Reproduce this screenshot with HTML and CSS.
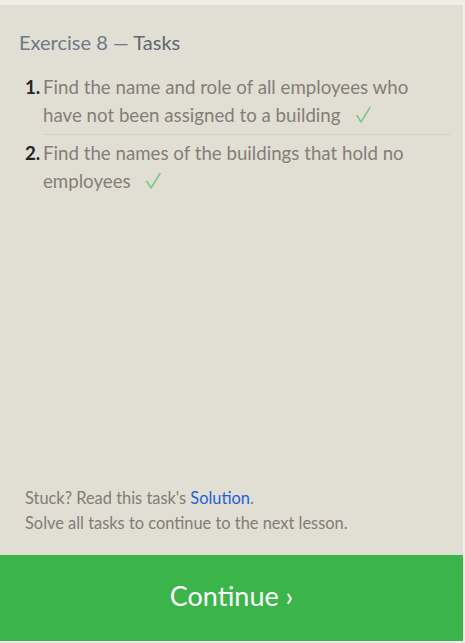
FILE: index.html
```html
<!DOCTYPE html>
<html>
<head>
<meta charset="utf-8">
<link rel="stylesheet" href="styles.css">
</head>
<body>
<div class="panel">
  <div class="content">
    <h2 class="title">Exercise 8 — <span class="title-strong">Tasks</span></h2>
    <ol class="tasks">
      <li class="task"><span class="num">1.</span><span class="text">Find the name and role of all employees who have not been assigned to a building<svg class="check" width="15" height="18" viewBox="0 0 15 18"><polyline points="1,9.5 5,16 14,1.5" fill="none" stroke="#82c786" stroke-width="1.6" stroke-linecap="round" stroke-linejoin="round"/></svg></span></li>
      <li class="task"><span class="num">2.</span><span class="text">Find the names of the buildings that hold no employees<svg class="check" width="15" height="18" viewBox="0 0 15 18"><polyline points="1,9.5 5,16 14,1.5" fill="none" stroke="#82c786" stroke-width="1.6" stroke-linecap="round" stroke-linejoin="round"/></svg></span></li>
    </ol>
  </div>
  <div class="footer">
    <p class="note">Stuck? Read this task's <a class="link" href="#">Solution</a>.</p>
    <p class="note">Solve all tasks to continue to the next lesson.</p>
  </div>
  <div class="continue">Continue ›</div>
</div>
</body>
</html>
```
FILE: styles.css
```css
html, body {
  margin: 0;
  padding: 0;
  background: #f1eee8;
  font-family: Lato, "Open Sans", sans-serif;
}
.panel {
  margin-top: 5px;
  width: 463px;
  height: 636px;
  background: #e1dfd4;
  display: flex;
  flex-direction: column;
}
.content {
  flex: 1;
  padding: 0 13px 0 19px;
}
.title {
  margin: 25px 0 0;
  font-size: 20px;
  font-weight: normal;
  color: #6f7887;
  line-height: 24px;
}
.title-strong {
  color: #5e6775;
}
.tasks {
  list-style: none;
  margin: 19px 0 0;
  padding: 0;
}
.task {
  display: flex;
  font-size: 18.7px;
  line-height: 28px;
  color: #857d78;
}
.task + .task .text {
  border-top: 1px solid #d3d0c5;
  padding-top: 4px;
}
.task .text {
  flex: 1;
  padding-bottom: 5px;
}
.num {
  width: 18px;
  padding-left: 6px;
  color: #252525;
  font-weight: bold;
  flex: none;
}
.task + .task .num {
  padding-top: 5px;
}
.check {
  margin-left: 15px;
  vertical-align: -2px;
}
.footer {
  padding: 0 0 20px 25px;
}
.note {
  margin: 0;
  font-size: 16.4px;
  line-height: 25px;
  color: #837b76;
}
.link {
  color: #1f5fd8;
  text-decoration: none;
}
.continue {
  height: 80px;
  padding-bottom: 6px;
  background: #3bb54a;
  color: #ffffff;
  font-size: 27px;
  display: flex;
  align-items: center;
  justify-content: center;
}
```
